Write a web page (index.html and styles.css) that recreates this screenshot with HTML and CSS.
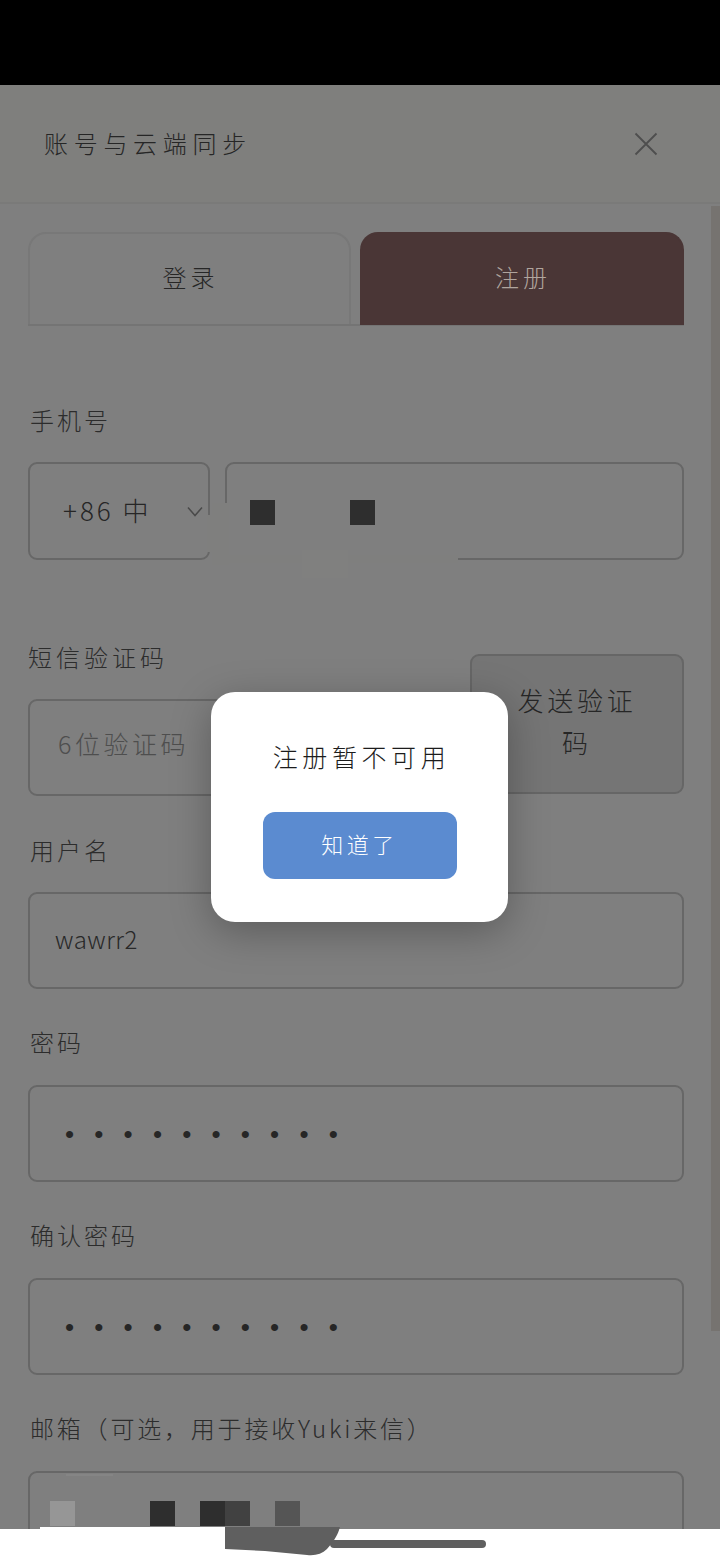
FILE: index.html
```html
<!DOCTYPE html>
<html lang="zh">
<head>
<meta charset="utf-8">
<title>账号与云端同步</title>
<link rel="stylesheet" href="styles.css">
</head>
<body>
<div class="phone">
  <div class="statusbar"></div>
  <main class="page">
    <header class="header">
      <h1 class="title">账号与云端同步</h1>
      <svg class="close" viewBox="0 0 24 24" aria-label="关闭"><path d="M1.5 1.5 22.5 22.5M22.5 1.5 1.5 22.5"/></svg>
    </header>
    <div class="content">
      <div class="scrollbar"></div>
      <div class="tabs">
        <div class="tab">登录</div>
        <div class="tab tab-active">注册</div>
      </div>

      <div class="label label-phone">手机号</div>
      <div class="row">
        <div class="field select">
          <span class="select-text">+86 中</span>
          <svg class="chevron" viewBox="0 0 16 11"><path d="M1 1.5 8 9.5 15 1.5"/></svg>
        </div>
        <div class="field grow phone-input">
          <span class="block"></span><span class="spacer"></span><span class="spacer"></span><span class="spacer"></span><span class="block"></span>
        </div>
      </div>

      <div class="code-row">
        <div class="code-col">
          <div class="label label-flush">短信验证码</div>
          <div class="field placeholder">6位验证码</div>
        </div>
        <div class="send">发送验证码</div>
      </div>

      <div class="label label-user">用户名</div>
      <div class="field value">wawrr2</div>

      <div class="label">密码</div>
      <div class="field dots">••••••••••</div>

      <div class="label">确认密码</div>
      <div class="field dots">••••••••••</div>

      <div class="label label-email">邮箱（可选，用于接收Yuki来信）</div>
      <div class="field email">
        <span class="block block-faint"></span><span class="spacer"></span><span class="spacer"></span><span class="spacer"></span><span class="block"></span><span class="spacer"></span><span class="block"></span><span class="block block-mid"></span><span class="spacer"></span><span class="block block-light"></span>
      </div>
    </div>

    <div class="patch patch-input-left"></div>
    <div class="patch patch-select-right"></div>
    <div class="patch patch-phone-low"></div>
    <div class="patch-faint"></div>
    <div class="email-mark"></div>

    <div class="dialog-wrap">
      <div class="dialog">
        <p class="dialog-text">注册暂不可用</p>
        <button class="dialog-btn">知道了</button>
      </div>
    </div>
  </main>
  <div class="homebar">
    <svg class="blob" viewBox="0 0 115 30"><path d="M0 0H115C113 7 110 13 102 22 97 27 90 29 82 28L40 24 0 22Z"/></svg>
    <div class="indicator"></div>
    <div class="white-lip"></div>
  </div>
</div>
</body>
</html>
```

FILE: styles.css
```css
* { box-sizing: border-box; }
html, body { margin: 0; padding: 0; }
body {
  width: 720px;
  height: 1559px;
  overflow: hidden;
  background: #fff;
  font-family: "Noto Sans CJK SC", "Noto Sans", sans-serif;
  font-weight: 300;
}
.phone { display: flex; flex-direction: column; height: 1559px; }
.statusbar { height: 85px; background: #000; flex: none; }
.page {
  position: relative;
  height: 1444px;
  flex: none;
  overflow: hidden;
  background: #7f7f7f;
  color: #262626;
}

.header {
  height: 119px;
  display: flex;
  align-items: center;
  justify-content: space-between;
  padding: 0 62px 2px 44px;
  background: #7f7f7d;
  border-bottom: 2px solid #7a7a79;
}
.title { margin: 0; font-size: 24px; font-weight: 300; letter-spacing: 5.7px; line-height: 36px; }
.close { width: 24px; height: 24px; margin-top: 2px; }
.close path { fill: none; stroke: #4e4e4e; stroke-width: 1.8; }

.content { position: relative; padding: 28px 36px 0 28px; }
.scrollbar {
  position: absolute;
  right: 0;
  top: 2px;
  width: 9px;
  height: 1125px;
  background: #767370;
}

.tabs { display: flex; gap: 9px; height: 94px; border-bottom: 2px solid #747474; }
.tab {
  width: 323px;
  display: flex;
  align-items: center;
  justify-content: center;
  font-size: 24px;
  letter-spacing: 4px;
  padding: 0 0 6px 2px;
  border: 2px solid #787878;
  border-bottom: 0;
  border-radius: 18px 18px 0 0;
}
.tab-active { width: 324px; background: #4a3636; border-color: #4a3636; color: #b0a59e; margin-bottom: -1px; }

.label {
  margin: 33px 0 23px 2px;
  font-size: 24px;
  line-height: 40px;
  letter-spacing: 3px;
  color: #2c2c2c;
}
.label-phone { margin-top: 74px; margin-bottom: 22px; }
.label-flush { margin: 0 0 22px; letter-spacing: 4px; }
.label-user { margin-top: 34px; margin-bottom: 22px; }
.label-email { letter-spacing: 2.8px; }

.row { display: flex; gap: 15px; }
.grow { flex: 1; }
.field {
  height: 97px;
  display: flex;
  align-items: center;
  border: 2px solid #676767;
  border-radius: 9px;
}
.row .field { height: 98px; }
.select { width: 182px; padding: 0 0 4px 33px; position: relative; }
.select-text { font-size: 26px; letter-spacing: 3px; white-space: pre; }
.chevron { position: absolute; left: 157px; top: 42px; width: 16px; height: 11px; }
.chevron path { fill: none; stroke: #4a4a4a; stroke-width: 1.5; }
.phone-input { padding: 2px 0 0 23px; }
.block { width: 25px; height: 25px; flex: none; background: #2e2e2e; }
.spacer { width: 25px; height: 25px; flex: none; }
.block-faint { background: #969696; }
.block-mid { background: #414141; }
.block-light { background: #555; }

.code-row { display: flex; align-items: flex-end; gap: 15px; margin-top: 77px; }
.code-col { flex: 1; }
.placeholder { padding: 0 0 9px 28px; font-size: 25px; letter-spacing: 3.5px; color: #4e4e4e; }
.send {
  width: 214px;
  height: 140px;
  margin-bottom: 2px;
  padding: 0 40px 6px;
  display: flex;
  align-items: center;
  justify-content: center;
  text-align: center;
  font-size: 26px;
  line-height: 42px;
  letter-spacing: 3.8px;
  background: #757575;
  border: 2px solid #666;
  border-radius: 9px;
}
.value { padding: 0 0 4px 25px; font-size: 24px; letter-spacing: 0.5px; color: #282828; }
.dots { padding: 0 0 0 35px; font-size: 26px; letter-spacing: 20.2px; line-height: 26px; color: #262626; font-family: "Liberation Sans", sans-serif; }
.email { padding: 28px 0 0 20px; height: 120px; align-items: flex-start; }

.patch { position: absolute; background: #7f7f7e; }
.patch-input-left { left: 212px; top: 418px; width: 17px; height: 62px; }
.patch-select-right { left: 207px; top: 430px; width: 5px; height: 37px; }
.patch-phone-low { left: 222px; top: 470px; width: 236px; height: 8px; }
.patch-faint { position: absolute; left: 302px; top: 465px; width: 46px; height: 28px; background: #80807f; }
.email-mark { position: absolute; left: 66px; top: 1389px; width: 47px; height: 2px; background: #858585; }

.dialog-wrap {
  position: absolute;
  inset: 0;
  display: flex;
  align-items: center;
  justify-content: center;
  padding-right: 1px;
}
.dialog {
  width: 297px;
  height: 230px;
  padding-top: 45px;
  display: flex;
  flex-direction: column;
  align-items: center;
  background: #fff;
  border-radius: 24px;
  box-shadow: 0 10px 40px rgba(0, 0, 0, 0.28);
}
.dialog-text { margin: 0 0 37px; font-size: 25px; line-height: 38px; letter-spacing: 4.6px; color: #1c1c1c; text-indent: 4px; }
.dialog-btn {
  width: 194px;
  height: 67px;
  padding: 0 0 6px;
  border: 0;
  border-radius: 12px;
  background: #5b8bd0;
  color: #fff;
  font-family: inherit;
  font-weight: 300;
  font-size: 22px;
  letter-spacing: 3.5px;
}

.homebar { position: relative; height: 30px; flex: none; background: #fff; }
.blob { position: absolute; left: 225px; top: -2px; width: 115px; height: 30px; }
.blob path { fill: #5f5f5f; }
.indicator { position: absolute; left: 330px; top: 11px; width: 156px; height: 8px; border-radius: 4px; background: #5f5f5f; }
.white-lip { position: absolute; left: 40px; top: -2px; width: 185px; height: 2px; background: #fff; }
```
